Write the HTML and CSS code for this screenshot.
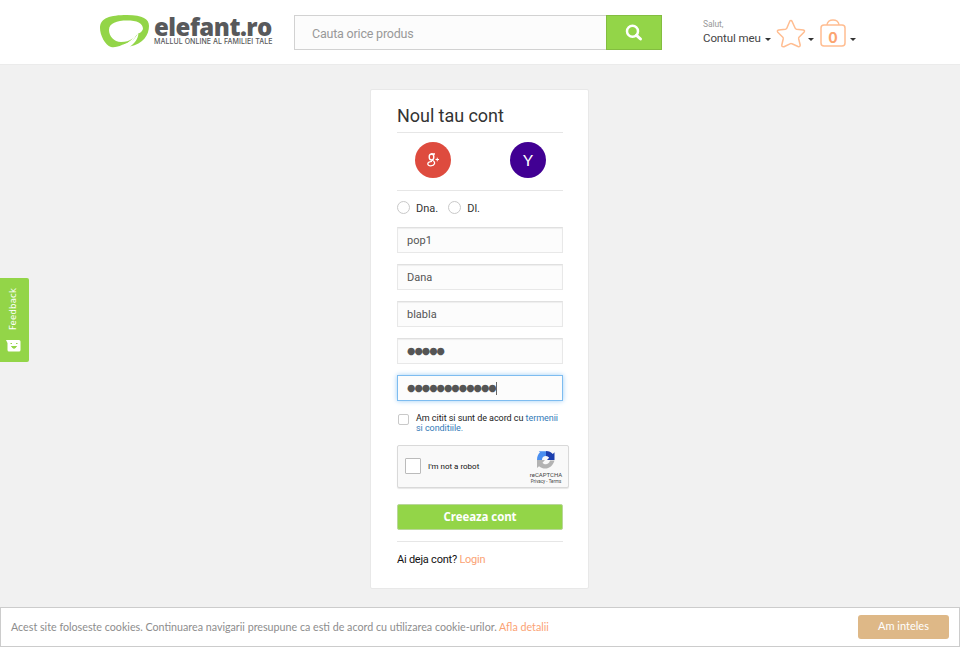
FILE: index.html
```html
<!DOCTYPE html>
<html lang="ro">
<head>
<meta charset="utf-8">
<title>elefant.ro - Noul tau cont</title>
<link rel="stylesheet" href="styles.css">
</head>
<body>
<header class="header">
  <a class="logo">
    <svg class="logo-mark" width="50" height="34" viewBox="0 0 50 34"><path fill="#93d548" fill-rule="evenodd" d="M0 13C0 3 10 0 27 0C43 0 49 4 49 11C49 20 43 29 30 31.500C35 28 38 24 38.500 18C35 23 32 27 25 29C21 30 17 33 11 32C5 30 0 20 0 13ZM9 15C9 8 17 5.500 27 5.500C37 5.500 43 8 43 14C42 16 41 18 38.500 18.500C34 22 31 27 21 27C14 27 9 21 9 15Z"/><path fill="none" stroke="#fff" stroke-width="1.300" d="M36 19C34 24 30 28 24 30"/></svg>
    <span class="logo-text"><b class="logo-name">elefant.ro</b><span class="logo-tag">MALLUL ONLINE AL FAMILIEI TALE</span></span>
  </a>
  <div class="search">
    <div class="search-input"><span>Cauta orice produs</span></div>
    <button class="search-button"><svg width="18" height="18" viewBox="0 0 18 18" fill="none" stroke="#fff"><circle cx="7.500" cy="7.300" r="5.500" stroke-width="2.500"/><path d="M11.500 11.300L15.500 15" stroke-width="3" stroke-linecap="round"/></svg></button>
  </div>
  <div class="account">
    <div class="account-label"><small>Salut,</small><span>Contul meu</span></div>
    <i class="caret caret-account"></i>
    <svg class="star" width="30" height="30" viewBox="0 0 30 30"><path fill="none" stroke="#ffbd91" stroke-width="1.500" stroke-linejoin="round" d="M14 1.800Q15 .8 16 2.200L19.200 9.300Q19.500 10 20.500 10.200L27.300 11Q29.300 11.600 28 13.200L23 18.300Q22.500 19 22.700 20L24.200 26Q24.200 28.200 22 27.500L16 24.800Q15 24.300 14 24.800L8 27.700Q5.500 28.200 5.800 26L7.200 20Q7.400 19 6.800 18.300L1.800 13.200Q.6 11.600 2.700 11L9.500 10.200Q10.500 10 10.800 9.300Z"/></svg>
    <i class="caret caret-star"></i>
    <svg class="bag" width="26" height="28" viewBox="0 0 26 28"><g fill="none" stroke="#ffbd91" stroke-width="1.500"><rect x="1" y="6" width="24" height="21" rx="3"/><path d="M7 6C7.500-.8 18.500-.8 19 6"/></g><text class="bag-count" x="13" y="23.500" text-anchor="middle">0</text></svg>
    <i class="caret caret-bag"></i>
  </div>
</header>

<aside class="feedback"><span>Feedback</span><svg width="15" height="12" viewBox="0 0 15 12"><path fill="#fff" d="M0 0H13Q14.500 0 14.500 1.500V10Q14.500 11.500 13 11.500H3Q1.500 11.500 1.500 10V3Z"/><path d="M4.500 3.500h1.500M10 3.500h1.500M5.500 6.500Q8 10 10.500 6.500Z" stroke="#93d548" fill="#93d548"/></svg></aside>

<main class="card">
  <h1>Noul tau cont</h1>
  <div class="social">
    <a class="google"><svg width="16" height="18" viewBox="0 0 16 18" fill="none" stroke="#fff"><ellipse cx="6.500" cy="6" rx="2.300" ry="3" stroke-width="1.400"/><path d="M6 3H10M6.500 9C8.500 9.700 10 10.700 9.500 12.800C8.500 15.500 3 15.500 2.800 13C2.700 10.800 5 10.600 7 10.400" stroke-width="1.300"/><path d="M10.500 8.500H14M12.250 6.700V10.300"/></svg></a>
    <a class="yahoo">Y</a>
  </div>
  <div class="titles"><i class="radio"></i><span>Dna.</span><i class="radio"></i><span>Dl.</span></div>
  <div class="fields">
    <div class="field">pop1</div>
    <div class="field">Dana</div>
    <div class="field">blabla</div>
    <div class="field"><span class="dots">●●●●●</span></div>
    <div class="field focused"><span class="dots">●●●●●●●●●●●●</span><i class="cursor"></i></div>
  </div>
  <div class="terms"><i class="checkbox"></i><p>Am citit si sunt de acord cu <a>termenii</a><br><a>si conditiile.</a></p></div>
  <div class="captcha">
    <i class="captcha-box"></i><span class="captcha-label">I'm not a robot</span>
    <div class="captcha-brand">
      <svg width="18" height="18" viewBox="0 0 18 18"><path fill="#4a8ff0" d="M0 9C0 5 1.500 2.500 3 1.500L1.800 .2H9V5Q5 5 5 9Z"/><path fill="#1c3fae" d="M9 0C12 0 14 1 15.800 3L17.500 1.200V9H10L12.200 6.700Q11 5 9 5Z"/><path fill="#b3b3b3" d="M0 9V17L2 15.200C8 20 15.500 17 17.500 9.500H13C12 13.500 8 14.500 5.500 11.700L8 9Z"/></svg>
      <span>reCAPTCHA</span><small>Privacy - Terms</small>
    </div>
  </div>
  <button class="submit">Creeaza cont</button>
  <div class="login">Ai deja cont? <a>Login</a></div>
</main>

<footer class="cookies"><p>Acest site foloseste cookies. Continuarea navigarii presupune ca esti de acord cu utilizarea cookie-urilor. <a>Afla detalii</a></p><button>Am inteles</button></footer>
</body>
</html>
```
FILE: styles.css
```css
* { box-sizing: border-box; }
body { margin: 0; height: 647px; overflow: hidden; position: relative; background: #f1f1f1; color: #333; font-family: Roboto, "Liberation Sans", sans-serif; font-size: 11px; }
button { border: 0; padding: 0; font-family: inherit; }
.header { height: 65px; padding-left: 100px; background: #fff; border-bottom: 1px solid #ebebeb; display: flex; align-items: flex-start; }
.logo { display: flex; width: 194px; padding-top: 15px; }
.logo-mark { flex: none; }
.logo-text { display: flex; flex-direction: column; margin-left: 4px; color: #58595b; white-space: nowrap; }
.logo-name { font: 800 24px/24px "Open Sans", sans-serif; letter-spacing: -.5px; }
.logo-tag { font: 500 7px/8px Inter, sans-serif; letter-spacing: .06px; margin-top: -1px; }
.search { display: flex; width: 368px; height: 35px; margin-top: 15px; }
.search-input { width: 312px; border: 1px solid #d2d2d2; border-right: 0; background: #fcfcfc; color: #999; padding-left: 17px; font-size: 12.500px; letter-spacing: -.2px; line-height: 36px; }
.search-button { width: 56px; background: #93d548; border: 1px solid #83bd40; display: flex; align-items: center; justify-content: center; }
.account { display: flex; margin-left: 41px; padding-top: 19px; }
.account-label { display: flex; flex-direction: column; width: 62px; white-space: nowrap; font-size: 11.500px; letter-spacing: -.1px; line-height: 16px; color: #444; }
.account-label small { font-size: 8.500px; line-height: 11px; color: #999; }
.caret { border: 3px solid transparent; border-top-color: #333; border-bottom: 0; width: 6px; height: 3px; margin-top: 19px; }
.caret-account { margin-right: 6px; }
.star { margin-left: -1px; }
.caret-star { margin-left: 2px; margin-right: 6px; }
.caret-bag { margin-left: 4px; }
.bag-count { font: 700 14px Inter, sans-serif; fill: #fba470; }
.feedback { position: absolute; left: 0; top: 278px; width: 29px; height: 84px; background: #93d548; border-radius: 0 2px 2px 0; display: flex; flex-direction: column; align-items: center; color: #fff; padding: 8px 3px 0 0; }
.feedback span { writing-mode: vertical-rl; transform: rotate(180deg); height: 44px; font: 8.500px/14px "DejaVu Sans", sans-serif; letter-spacing: .2px; white-space: nowrap; }
.feedback svg { margin-top: 10px; }
.card { width: 219px; height: 500px; margin: 24px 0 0 370px; padding: 1px 25px 0 26px; background: #fff; border: 1px solid #e8e8e8; border-radius: 2px; }
.card h1 { margin: 0; height: 42px; padding-top: 12px; border-bottom: 1px solid #e6e6e6; font-size: 18px; line-height: 25px; font-weight: 400; white-space: nowrap; letter-spacing: -.05px; }
.social { display: flex; justify-content: space-between; height: 58px; padding: 9px 17px 0 18px; border-bottom: 1px solid #e6e6e6; }
.social a { width: 36px; height: 36px; border-radius: 50%; display: flex; align-items: center; justify-content: center; }
.google { background: #de4b3e; }
.yahoo { background: #410093; color: #fff; font: 16px/36px Lato, sans-serif; }
.titles { display: flex; height: 36px; padding-top: 10px; line-height: 15px; }
.radio { width: 13px; height: 13px; border: 1px solid #c9c9c9; border-radius: 50%; margin-right: 6px; }
.titles span + .radio { margin-left: 10px; }
.fields { display: flex; flex-direction: column; gap: 11px; }
.field { height: 26px; border: 1px solid #e8e8e8; border-top-color: #e0e0e0; background: #fcfcfc; box-shadow: inset 0 1px 1px #eee; padding: 1px 0 0 9px; line-height: 24px; color: #555; display: flex; align-items: center; }
.focused { border-color: #7dbcf0; box-shadow: 0 0 5px #9fcef5; }
.dots { font: 9.600px/24px "DejaVu Sans", sans-serif; letter-spacing: -.98px; color: #555; margin-top: -2px; }
.cursor { width: 1px; height: 13px; background: #666; }
.terms { display: flex; height: 44px; padding-top: 12px; font-size: 9px; letter-spacing: -.05px; line-height: 10px; color: #222; white-space: nowrap; }
.terms p { margin: 0 0 0 7px; }
.terms a { color: #337ab7; }
.checkbox { width: 11px; height: 11px; border: 1px solid #c9c9c9; border-radius: 2px; margin: 1px 0 0 1px; }
.captcha { width: 172px; height: 43px; display: flex; align-items: center; background: #f9f9f9; border: 1px solid #d9d9d9; border-radius: 2px; padding-left: 7px; box-shadow: 0 1px 1px #e7e7e7; }
.captcha-box { width: 16px; height: 16px; background: #fff; border: 1px solid #bbb; border-radius: 1px; margin-bottom: 2px; }
.captcha-label { font: 8px/12px Roboto, sans-serif; color: #111; margin: 0 0 0 7px; width: 100px; }
.captcha-brand { width: 36px; display: flex; flex-direction: column; align-items: center; color: #444; white-space: nowrap; font-size: 6px; line-height: 8px; padding-top: 2px; }
.captcha-brand svg { margin-bottom: 2px; }
.captcha-brand small { font-size: 4.500px; line-height: 6px; }
.submit { display: block; width: 166px; height: 26px; margin-top: 16px; background: #93d548; border: 1px solid #b9d79a; border-radius: 2px; color: #fff; font: 700 11.500px/24px "Open Sans", sans-serif; letter-spacing: -.1px; }
.login { border-top: 1px solid #e6e6e6; margin-top: 11px; padding-top: 10px; line-height: 15px; color: #111; letter-spacing: -.23px; }
.login a, .cookies a { color: #fba274; }
.cookies { position: absolute; left: 0; bottom: 0; width: 960px; height: 40px; background: #fff; border: 1px solid #ccc; display: flex; align-items: center; justify-content: space-between; padding: 0 10px; color: #8d8d8d; font: 10.710px/20px Lato, sans-serif; }
.cookies p { margin: 0; white-space: nowrap; }
.cookies button { width: 91px; height: 24px; border-radius: 3px; background: #deb887; color: #fff; font-size: 11px; line-height: 22px; padding-bottom: 2px; }
```
